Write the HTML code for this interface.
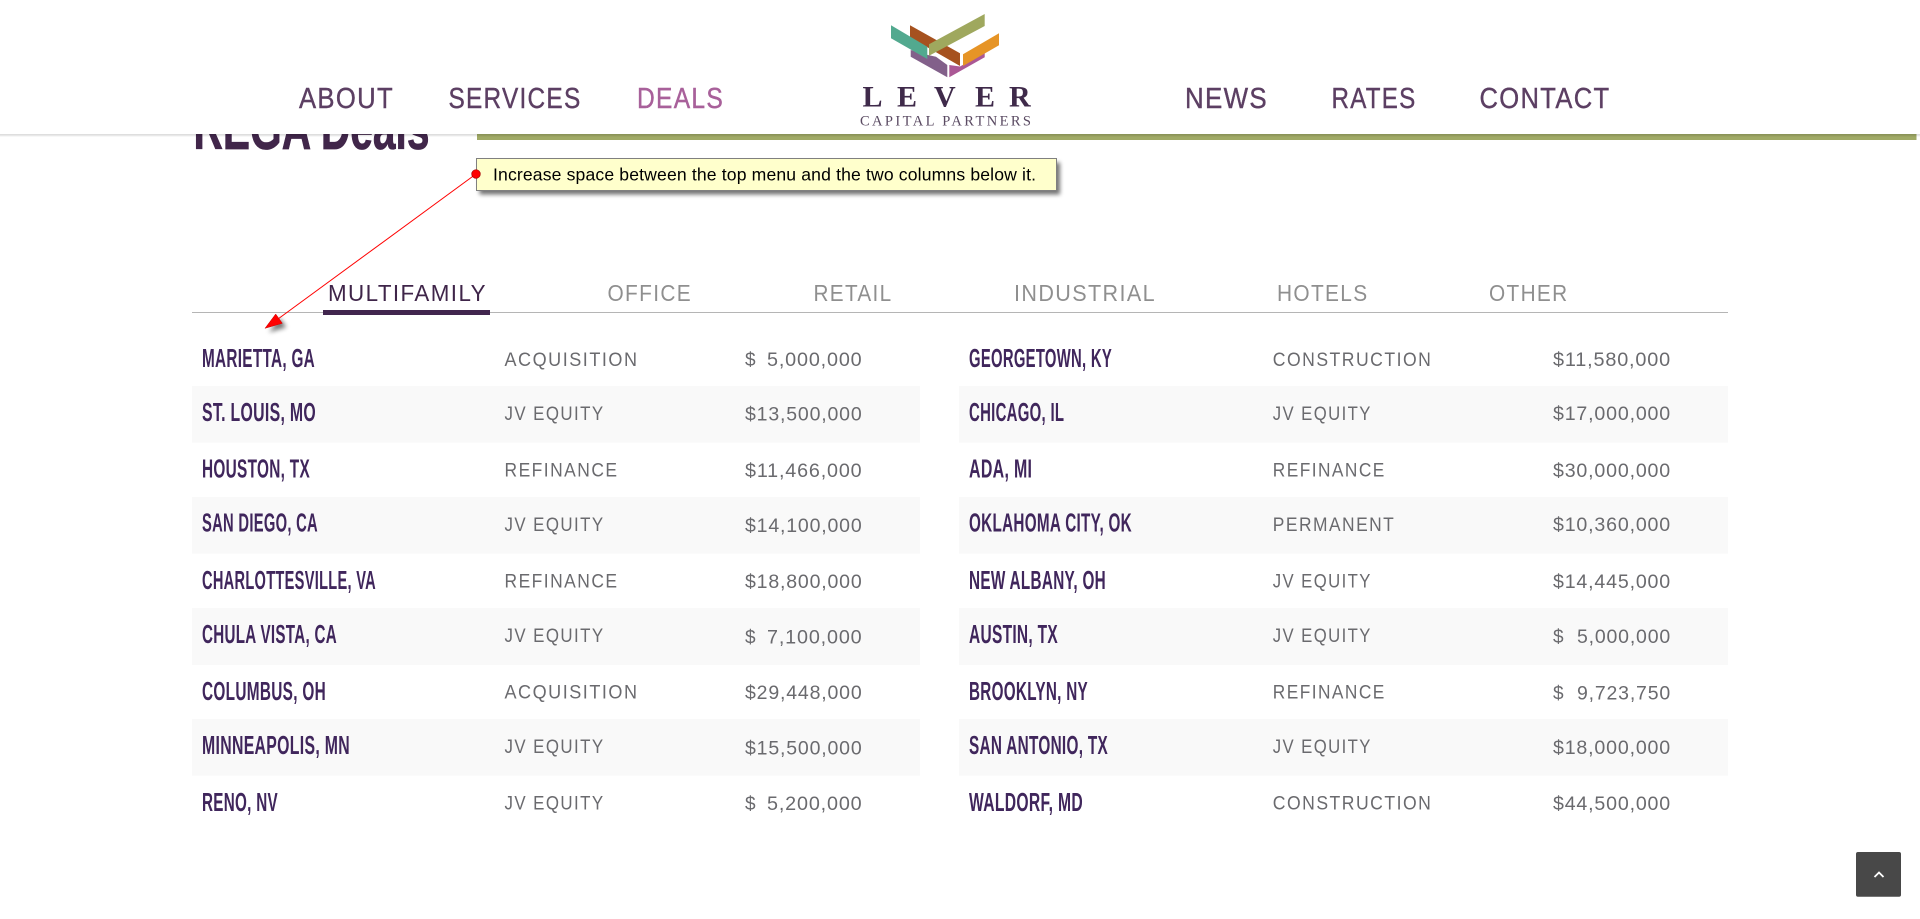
<!DOCTYPE html>
<html lang="en">
<head>
<meta charset="utf-8">
<title>Deals</title>
<style>
html,body{margin:0;padding:0;width:1920px;height:919px;overflow:hidden;background:#fff}
svg{display:block}
text{white-space:pre}
.nav{font:29px "Liberation Sans",sans-serif;fill:#5c3f63;letter-spacing:1.5px;stroke:#5c3f63;stroke-width:.4px}
.tab{font:23.5px "Liberation Sans",sans-serif;fill:#8f8f8f;letter-spacing:1.5px}
.c{font:bold 25.5px "Liberation Sans Narrow","Liberation Sans",sans-serif;fill:#40265c;letter-spacing:.5px}
.t{font:19px "Liberation Sans",sans-serif;fill:#6a6a6e;letter-spacing:1.6px}
.a{font:19px "Liberation Sans",sans-serif;fill:#6a6a6e;letter-spacing:.8px}
</style>
</head>
<body>
<svg xmlns="http://www.w3.org/2000/svg" width="1920" height="919" viewBox="0 0 1920 919">
<defs>
<filter id="hs" x="-5%" y="-20%" width="110%" height="140%"><feGaussianBlur stdDeviation="2"/></filter>
<filter id="ts" x="-5%" y="-30%" width="110%" height="170%"><feGaussianBlur stdDeviation="2"/></filter>
<filter id="as" x="-50%" y="-50%" width="200%" height="200%"><feGaussianBlur stdDeviation="2.5"/></filter>
</defs>

<text x="193.5" y="149" font-family="Liberation Sans Narrow, Liberation Sans, sans-serif" font-weight="bold" font-size="60" fill="#41264a" stroke="#41264a" stroke-width=".8" textLength="236" lengthAdjust="spacingAndGlyphs">REGA Deals</text>
<rect x="477" y="134" width="1439.5" height="6" fill="#a0aa66"/>

<!-- header -->
<rect x="-10" y="128" width="1940" height="7" fill="#000" opacity=".22" filter="url(#hs)"/>
<rect x="0" y="0" width="1920" height="134" fill="#fff"/>

<text class="nav" x="299" y="108" textLength="95" lengthAdjust="spacingAndGlyphs">ABOUT</text>
<text class="nav" x="448.5" y="108" textLength="133" lengthAdjust="spacingAndGlyphs">SERVICES</text>
<text class="nav" x="637" y="108" textLength="87" lengthAdjust="spacingAndGlyphs" style="fill:#a8609a;stroke:#a8609a">DEALS</text>
<text class="nav" x="1185" y="108" textLength="83" lengthAdjust="spacingAndGlyphs">NEWS</text>
<text class="nav" x="1331.5" y="108" textLength="85" lengthAdjust="spacingAndGlyphs">RATES</text>
<text class="nav" x="1479.5" y="108" textLength="131" lengthAdjust="spacingAndGlyphs">CONTACT</text>

<!-- logo -->
<polygon points="910.7,50 928,55 936,56.7 947.3,65 947.3,77.3 910.7,56.7" fill="#82608a"/>
<polygon points="949.3,65 960,66.5 984.7,52.7 984.7,57.3 949.3,77.3" fill="#ab5895"/>
<polygon points="910,25.3 960,53.3 960,66 910,37.3" fill="#a6521f"/>
<polygon points="891,25.3 927.3,46.7 927.3,59 891,38.3" fill="#52a98f"/>
<polygon points="984.7,14 984.7,26 929,55.7 929,44.3" fill="#9fa85e"/>
<polygon points="999,33.3 999,45.3 963,66 963,54.3" fill="#e69426"/>
<g font-family="Liberation Serif, serif" fill="#3f2a4a">
<text x="862.5" y="106.7" font-size="30" font-weight="bold">L</text>
<text x="897" y="106.7" font-size="30" font-weight="bold">E</text>
<text x="934" y="106.7" font-size="30" font-weight="bold">V</text>
<text x="975" y="106.7" font-size="30" font-weight="bold">E</text>
<text x="1009" y="106.7" font-size="30" font-weight="bold">R</text>
<text x="860" y="125.7" font-size="14.5" textLength="171" lengthAdjust="spacing" fill="#5a4a62">CAPITAL PARTNERS</text>
</g>

<!-- tabs -->
<text class="tab" x="328" y="301" textLength="159" lengthAdjust="spacingAndGlyphs" style="fill:#3f2549">MULTIFAMILY</text>
<text class="tab" x="607.5" y="301" textLength="84.5" lengthAdjust="spacingAndGlyphs">OFFICE</text>
<text class="tab" x="813.5" y="301" textLength="79" lengthAdjust="spacingAndGlyphs">RETAIL</text>
<text class="tab" x="1014" y="301" textLength="142" lengthAdjust="spacingAndGlyphs">INDUSTRIAL</text>
<text class="tab" x="1277" y="301" textLength="91.5" lengthAdjust="spacingAndGlyphs">HOTELS</text>
<text class="tab" x="1489" y="301" textLength="79.5" lengthAdjust="spacingAndGlyphs">OTHER</text>
<rect x="192" y="312" width="1536" height="1" fill="#b5b5b5"/>
<rect x="323" y="310" width="167" height="5" fill="#41264e"/>

<!-- stripes -->
<g fill="#f9f9f9">
<rect x="192" y="386" width="728" height="56.7"/><rect x="959" y="386" width="769" height="56.7"/>
<rect x="192" y="497" width="728" height="56.7"/><rect x="959" y="497" width="769" height="56.7"/>
<rect x="192" y="608" width="728" height="57"/><rect x="959" y="608" width="769" height="57"/>
<rect x="192" y="719" width="728" height="56.7"/><rect x="959" y="719" width="769" height="56.7"/>
</g>

<!-- left column -->
<text class="c" x="202" y="367" textLength="113" lengthAdjust="spacingAndGlyphs">MARIETTA, GA</text>
<text class="c" x="202" y="421" textLength="114" lengthAdjust="spacingAndGlyphs">ST. LOUIS, MO</text>
<text class="c" x="202" y="477.5" textLength="108" lengthAdjust="spacingAndGlyphs">HOUSTON, TX</text>
<text class="c" x="202" y="531.5" textLength="116" lengthAdjust="spacingAndGlyphs">SAN DIEGO, CA</text>
<text class="c" x="202" y="589" textLength="174" lengthAdjust="spacingAndGlyphs">CHARLOTTESVILLE, VA</text>
<text class="c" x="202" y="643" textLength="135" lengthAdjust="spacingAndGlyphs">CHULA VISTA, CA</text>
<text class="c" x="202" y="700" textLength="124" lengthAdjust="spacingAndGlyphs">COLUMBUS, OH</text>
<text class="c" x="202" y="754" textLength="148" lengthAdjust="spacingAndGlyphs">MINNEAPOLIS, MN</text>
<text class="c" x="202" y="811" textLength="76" lengthAdjust="spacingAndGlyphs">RENO, NV</text>

<text class="t" x="504.5" y="366" textLength="134" lengthAdjust="spacingAndGlyphs">ACQUISITION</text>
<text class="t" x="504.5" y="420" textLength="100" lengthAdjust="spacingAndGlyphs">JV EQUITY</text>
<text class="t" x="504.5" y="476.5" textLength="114" lengthAdjust="spacingAndGlyphs">REFINANCE</text>
<text class="t" x="504.5" y="531" textLength="100" lengthAdjust="spacingAndGlyphs">JV EQUITY</text>
<text class="t" x="504.5" y="587.5" textLength="114" lengthAdjust="spacingAndGlyphs">REFINANCE</text>
<text class="t" x="504.5" y="642" textLength="100" lengthAdjust="spacingAndGlyphs">JV EQUITY</text>
<text class="t" x="504.5" y="698.5" textLength="134" lengthAdjust="spacingAndGlyphs">ACQUISITION</text>
<text class="t" x="504.5" y="753" textLength="100" lengthAdjust="spacingAndGlyphs">JV EQUITY</text>
<text class="t" x="504.5" y="809.5" textLength="100" lengthAdjust="spacingAndGlyphs">JV EQUITY</text>

<text class="a" x="745" y="366">$</text><text class="a" x="767" y="366" textLength="95.5" lengthAdjust="spacingAndGlyphs">5,000,000</text>
<text class="a" x="745" y="420.5" textLength="117.5" lengthAdjust="spacingAndGlyphs">$13,500,000</text>
<text class="a" x="745" y="477" textLength="117.5" lengthAdjust="spacingAndGlyphs">$11,466,000</text>
<text class="a" x="745" y="532" textLength="117.5" lengthAdjust="spacingAndGlyphs">$14,100,000</text>
<text class="a" x="745" y="588" textLength="117.5" lengthAdjust="spacingAndGlyphs">$18,800,000</text>
<text class="a" x="745" y="643.5">$</text><text class="a" x="767" y="643.5" textLength="95.5" lengthAdjust="spacingAndGlyphs">7,100,000</text>
<text class="a" x="745" y="699" textLength="117.5" lengthAdjust="spacingAndGlyphs">$29,448,000</text>
<text class="a" x="745" y="754.5" textLength="117.5" lengthAdjust="spacingAndGlyphs">$15,500,000</text>
<text class="a" x="745" y="810">$</text><text class="a" x="767" y="810" textLength="95.5" lengthAdjust="spacingAndGlyphs">5,200,000</text>

<!-- right column -->
<text class="c" x="969" y="367" textLength="143" lengthAdjust="spacingAndGlyphs">GEORGETOWN, KY</text>
<text class="c" x="969" y="421" textLength="95.3" lengthAdjust="spacingAndGlyphs">CHICAGO, IL</text>
<text class="c" x="969" y="477.5" textLength="63.3" lengthAdjust="spacingAndGlyphs">ADA, MI</text>
<text class="c" x="969" y="531.5" textLength="163" lengthAdjust="spacingAndGlyphs">OKLAHOMA CITY, OK</text>
<text class="c" x="969" y="589" textLength="137" lengthAdjust="spacingAndGlyphs">NEW ALBANY, OH</text>
<text class="c" x="969" y="643" textLength="89" lengthAdjust="spacingAndGlyphs">AUSTIN, TX</text>
<text class="c" x="969" y="700" textLength="119" lengthAdjust="spacingAndGlyphs">BROOKLYN, NY</text>
<text class="c" x="969" y="754" textLength="139" lengthAdjust="spacingAndGlyphs">SAN ANTONIO, TX</text>
<text class="c" x="969" y="811" textLength="114" lengthAdjust="spacingAndGlyphs">WALDORF, MD</text>

<text class="t" x="1272.8" y="366" textLength="159.5" lengthAdjust="spacingAndGlyphs">CONSTRUCTION</text>
<text class="t" x="1272.8" y="420" textLength="99" lengthAdjust="spacingAndGlyphs">JV EQUITY</text>
<text class="t" x="1272.8" y="476.5" textLength="113" lengthAdjust="spacingAndGlyphs">REFINANCE</text>
<text class="t" x="1272.8" y="531" textLength="122.5" lengthAdjust="spacingAndGlyphs">PERMANENT</text>
<text class="t" x="1272.8" y="587.5" textLength="99" lengthAdjust="spacingAndGlyphs">JV EQUITY</text>
<text class="t" x="1272.8" y="642" textLength="99" lengthAdjust="spacingAndGlyphs">JV EQUITY</text>
<text class="t" x="1272.8" y="698.5" textLength="113" lengthAdjust="spacingAndGlyphs">REFINANCE</text>
<text class="t" x="1272.8" y="753" textLength="99" lengthAdjust="spacingAndGlyphs">JV EQUITY</text>
<text class="t" x="1272.8" y="809.5" textLength="159.5" lengthAdjust="spacingAndGlyphs">CONSTRUCTION</text>

<text class="a" x="1553" y="366" textLength="118" lengthAdjust="spacingAndGlyphs">$11,580,000</text>
<text class="a" x="1553" y="420" textLength="118" lengthAdjust="spacingAndGlyphs">$17,000,000</text>
<text class="a" x="1553" y="477" textLength="118" lengthAdjust="spacingAndGlyphs">$30,000,000</text>
<text class="a" x="1553" y="531" textLength="118" lengthAdjust="spacingAndGlyphs">$10,360,000</text>
<text class="a" x="1553" y="588" textLength="118" lengthAdjust="spacingAndGlyphs">$14,445,000</text>
<text class="a" x="1553" y="643">$</text><text class="a" x="1577" y="643" textLength="94" lengthAdjust="spacingAndGlyphs">5,000,000</text>
<text class="a" x="1553" y="699.5">$</text><text class="a" x="1577" y="699.5" textLength="94" lengthAdjust="spacingAndGlyphs">9,723,750</text>
<text class="a" x="1553" y="754" textLength="118" lengthAdjust="spacingAndGlyphs">$18,000,000</text>
<text class="a" x="1553" y="810" textLength="118" lengthAdjust="spacingAndGlyphs">$44,500,000</text>

<!-- annotation -->
<polygon points="265,328.3 275.7,314 282.3,323.3" fill="#000" opacity=".55" filter="url(#as)" transform="translate(4,4)"/>
<line x1="476" y1="174" x2="278" y2="319" stroke="#f00" stroke-width="1"/>
<polygon points="265,328.3 275.7,314 282.3,323.3" fill="#f00" stroke="#c00" stroke-width=".5"/>
<rect x="479.5" y="162.5" width="580.5" height="32" fill="#000" opacity=".55" filter="url(#ts)"/>
<rect x="476.5" y="158.5" width="580" height="32" fill="#ffffcc" stroke="#808080" stroke-width="1"/>
<circle cx="476" cy="174" r="4.3" fill="#f00" stroke="#a00" stroke-width=".7"/>
<text x="493" y="180.7" font-family="Liberation Sans, sans-serif" font-size="17.6" fill="#000" textLength="543" lengthAdjust="spacing">Increase space between the top menu and the two columns below it.</text>

<!-- back to top -->
<rect x="1856" y="852" width="45" height="44.7" rx="2" fill="#484848"/>
<path d="M1874.5 877L1879 872.5L1883.5 877" fill="none" stroke="#fff" stroke-width="1.8"/>
</svg>
</body>
</html>
